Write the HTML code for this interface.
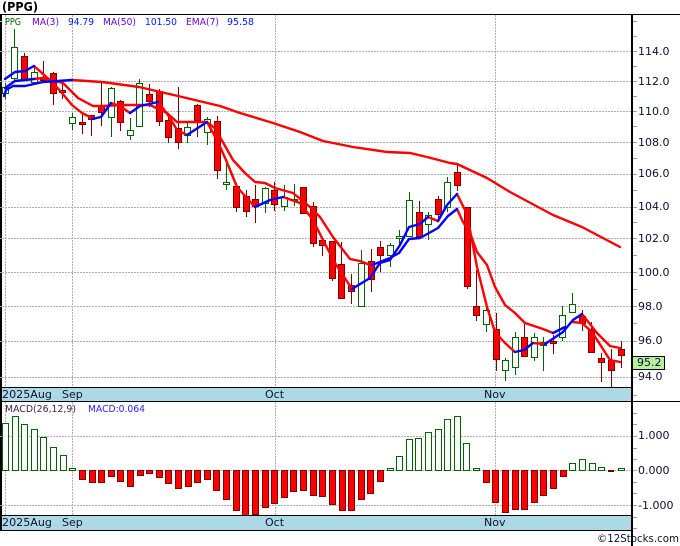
<!DOCTYPE html>
<html><head><meta charset="utf-8"><style>
html,body{margin:0;padding:0;background:#fff;width:680px;height:546px;overflow:hidden}
svg{display:block}
text{font-family:"DejaVu Sans","Liberation Sans",sans-serif;font-size:11px;fill:#101030}
.l{font-size:10px}
</style></head><body>
<svg width="680" height="546" viewBox="0 0 680 546" xmlns="http://www.w3.org/2000/svg">
<rect width="680" height="546" fill="#fff"/>
<g shape-rendering="crispEdges">
<path fill="none" stroke="#b0b0b0" stroke-dasharray="2 1" d="M2 51.5H632M2 81.5H632M2 111.5H632M2 142.5H632M2 174.5H632M2 207.5H632M2 238.5H632M2 272.5H632M2 306.5H632M2 341.5H632M2 377.5H632M2 436.5H632M2 470.5H632M2 505.5H632M5.5 15V516M72.5 15V516M275.5 15V516M495.5 15V516"/>
<path fill="none" stroke="#a0a0a0" d="M632 21.5h5M632 36.5h5M632 51.5h5M632 66.5h5M632 81.5h5M632 96.5h5M632 111.5h5M632 126.5h5M632 142.5h5M632 158.5h5M632 174.5h5M632 190.5h5M632 207.5h5M632 222.5h5M632 238.5h5M632 255.5h5M632 272.5h5M632 289.5h5M632 306.5h5M632 323.5h5M632 341.5h5M632 359.5h5M632 377.5h5M632 395.5h5M632 413.5h5M632 424.5h5M632 436.5h5M632 448.5h5M632 459.5h5M632 470.5h5M632 482.5h5M632 493.5h5M632 505.5h5M632 517.5h5M632 528.5h5"/>
<!-- green wicks -->
<path fill="none" stroke="#006400" d="M5.5 83V99M14.5 29V80M34.5 66V83M72.5 113V130M111.5 87V137M130.5 118V140M139.5 79V126M187.5 122V143M207.5 117V145M226.5 164V190M265.5 187V213M284.5 185V211M294.5 184V206M361.5 250V306M390.5 243V267M399.5 230V245M409.5 192V237M428.5 212V240M447.5 177V212M486.5 307V332M505.5 358V381M515.5 332V375M534.5 333V361M543.5 337V371M562.5 306V341M572.5 293V312"/>
<!-- red wicks -->
<path fill="none" stroke="#800000" d="M24.5 53V80M43.5 61V82M53.5 72V105M62.5 82V99M82.5 113V134M91.5 115V136M101.5 82V126M120.5 100V131M149.5 84V107M159.5 89V126M168.5 113V143M178.5 87V149M197.5 104V137M217.5 116V179M236.5 183V212M246.5 190V217M255.5 185V223M274.5 182V211M303.5 187V213M313.5 202V247M322.5 238V256M332.5 241V281M341.5 242V299M351.5 274V304M371.5 249V292M380.5 241V272M419.5 201V238M438.5 196V222M457.5 163V191M467.5 207V289M476.5 270V321M496.5 313V371M524.5 323V356M553.5 335V354M582.5 310V331M591.5 322V353M601.5 353V382M611.5 349V387M621.5 341V368"/>
<!-- green bodies -->
<path fill="#fff" stroke="#006400" d="M2.5 87.5h6v6h-6zM11.5 47.5h6v31h-6zM31.5 72.5h6v10h-6zM69.5 117.5h6v6h-6zM108.5 88.5h6v29h-6zM127.5 130.5h6v5h-6zM136.5 83.5h6v43h-6zM184.5 127.5h6v8h-6zM204.5 119.5h6v13h-6zM223.5 182.5h6v2h-6zM262.5 188.5h6v15h-6zM281.5 197.5h6v9h-6zM291.5 199.5h6v1h-6zM358.5 263.5h6v43h-6zM387.5 245.5h6v10h-6zM396.5 236.5h6v2h-6zM406.5 200.5h6v36h-6zM425.5 215.5h6v9h-6zM444.5 182.5h6v25h-6zM483.5 310.5h6v14h-6zM502.5 360.5h6v10h-6zM512.5 337.5h6v30h-6zM531.5 337.5h6v20h-6zM540.5 342.5h6v3h-6zM559.5 315.5h6v22h-6zM569.5 304.5h6v8h-6z"/>
<!-- red bodies -->
<path fill="#f00" stroke="#800000" d="M21.5 56.5h6v24h-6zM40.5 78.5h6v2h-6zM50.5 73.5h6v20h-6zM59.5 90.5h6v2h-6zM79.5 122.5h6v2h-6zM88.5 115.5h6v4h-6zM98.5 106.5h6v6h-6zM117.5 101.5h6v21h-6zM146.5 94.5h6v7h-6zM156.5 91.5h6v30h-6zM165.5 120.5h6v17h-6zM175.5 128.5h6v14h-6zM194.5 105.5h6v15h-6zM214.5 121.5h6v49h-6zM233.5 186.5h6v21h-6zM243.5 196.5h6v15h-6zM252.5 199.5h6v7h-6zM271.5 190.5h6v14h-6zM300.5 187.5h6v26h-6zM310.5 206.5h6v37h-6zM319.5 240.5h6v5h-6zM329.5 241.5h6v37h-6zM338.5 264.5h6v34h-6zM348.5 285.5h6v6h-6zM368.5 261.5h6v18h-6zM377.5 247.5h6v8h-6zM416.5 212.5h6v24h-6zM435.5 199.5h6v15h-6zM454.5 172.5h6v13h-6zM464.5 207.5h6v79h-6zM473.5 306.5h6v9h-6zM493.5 329.5h6v30h-6zM521.5 337.5h6v19h-6zM550.5 341.5h6v2h-6zM579.5 316.5h6v7h-6zM588.5 329.5h6v23h-6zM598.5 358.5h6v4h-6zM608.5 360.5h6v10h-6zM618.5 349.5h6v6h-6z"/>
</g>
<!-- moving averages -->
<g fill="none" stroke-width="2.4" stroke-linejoin="round" stroke-linecap="round">
<path stroke="#f00" d="M72 80L102 82L139 87L178 96L220 106L240 113L273 123L300 132L323 141L353 147L387 152L410 153L427 157L450 163L457 164L487 178L510 192L553 215L582 227L620 247"/>
<path stroke="#f00" d="M34 79L43 78L63 83L78 98L93 106L103 106L120 105L150 105L167 113L177 122L195 122L207 122L217 130L220 137L233 160L245 173L255 182L265 183L275 188L293 193L310 207L320 217L333 237L350 259L360 261L370 265"/>
<path stroke="#f00" d="M34 66L43 74L53 83L62 93L72 105L82 113L92 118M111 103L120 106L130 113M159 103L168 115L177 130L187 135M207 122L217 140L226 160L237 187L255 207M283 197L300 203L313 220L323 240L335 263L352 289M428 217L438 221"/>
<path stroke="#f00" d="M457 194L465 210L470 230L477 267L487 307L495 332L505 343L515 352M533 343L545 344M573 322L582 323L592 332L610 360L620 362"/>
<path stroke="#f00" d="M457 209L463 222L470 233L477 252L487 265L495 287L505 305L515 313L525 323L543 329L553 333M582 314L597 333L610 346L620 348"/>
<path stroke="#00f" d="M4 96L6 90L13 86L25 86L43 82L72 80"/>
<path stroke="#00f" d="M5 79L15 72L25 71L34 66M5 88L15 81L34 79"/>
<path stroke="#00f" d="M92 119L101 117L111 103M130 113L140 106L158 102M187 135L207 122M255 207L270 200L283 197"/>
<path stroke="#00f" d="M352 289L370 278L380 263L390 260L400 245L409 227L420 224L428 217M438 221L447 205L457 194"/>
<path stroke="#00f" d="M372 265L390 258L399 253L409 239L420 238L438 228L448 216L457 209"/>
<path stroke="#00f" d="M515 352L524 350L533 343M545 344L563 332L573 320L582 314M553 333L565 327"/>
</g>
<g shape-rendering="crispEdges">
<!-- MACD -->
<path fill="#fff" stroke="#006400" d="M2.5 423.5h6v47h-6zM12.5 416.5h6v54h-6zM21.5 424.5h6v46h-6zM31.5 429.5h6v41h-6zM40.5 437.5h6v33h-6zM50.5 447.5h6v23h-6zM60.5 455.5h6v15h-6zM69.5 468.5h6v2h-6zM387.5 468.5h6v2h-6zM396.5 456.5h6v14h-6zM406.5 439.5h6v31h-6zM415.5 438.5h6v32h-6zM425.5 432.5h6v38h-6zM435.5 429.5h6v41h-6zM444.5 419.5h6v51h-6zM454.5 416.5h6v54h-6zM463.5 443.5h6v27h-6zM473.5 468.5h6v2h-6zM569.5 463.5h6v7h-6zM579.5 459.5h6v11h-6zM589.5 463.5h6v7h-6zM598.5 467.5h6v3h-6zM618.5 468.5h6v2h-6z"/>
<path fill="#f00" stroke="#800000" d="M79.5 470.5h6v9h-6zM89.5 470.5h6v12h-6zM98.5 470.5h6v12h-6zM108.5 470.5h6v6h-6zM117.5 470.5h6v11h-6zM127.5 470.5h6v16h-6zM137.5 470.5h6v5h-6zM146.5 470.5h6v3h-6zM156.5 470.5h6v7h-6zM165.5 470.5h6v13h-6zM175.5 470.5h6v18h-6zM185.5 470.5h6v16h-6zM194.5 470.5h6v12h-6zM204.5 470.5h6v9h-6zM213.5 470.5h6v20h-6zM223.5 470.5h6v29h-6zM233.5 470.5h6v40h-6zM242.5 470.5h6v45h-6zM252.5 470.5h6v44h-6zM262.5 470.5h6v37h-6zM271.5 470.5h6v33h-6zM281.5 470.5h6v27h-6zM290.5 470.5h6v21h-6zM300.5 470.5h6v20h-6zM310.5 470.5h6v25h-6zM319.5 470.5h6v26h-6zM329.5 470.5h6v34h-6zM339.5 470.5h6v40h-6zM348.5 470.5h6v40h-6zM358.5 470.5h6v29h-6zM367.5 470.5h6v23h-6zM377.5 470.5h6v11h-6zM483.5 470.5h6v12h-6zM492.5 470.5h6v32h-6zM502.5 470.5h6v42h-6zM512.5 470.5h6v39h-6zM521.5 470.5h6v39h-6zM531.5 470.5h6v32h-6zM540.5 470.5h6v25h-6zM550.5 470.5h6v18h-6zM560.5 470.5h6v6h-6z"/>
<rect x="608" y="470" width="6" height="2" fill="#700000"/>
<!-- bands -->
<rect x="0" y="388" width="632" height="13" fill="#add8e6"/>
<rect x="0" y="516" width="632" height="14" fill="#add8e6"/>
<path fill="none" stroke="#000" d="M0 14.5H680M0 387.5H632M0 401.5H680M0 515.5H632M0 530.5H632"/>
<path fill="none" stroke="#000" stroke-width="2" d="M632 14V546M1 14V531"/>
<path fill="none" stroke="#a0a0a0" d="M0 21.5H2M0 51.5H2M0 81.5H2M0 111.5H2M0 142.5H2M0 174.5H2M0 207.5H2M0 238.5H2M0 272.5H2M0 306.5H2M0 341.5H2M0 377.5H2M0 436.5H2M0 505.5H2"/>
<rect x="632.5" y="356.5" width="32" height="13" fill="#b4f0a0" stroke="#000"/>
</g>
<text x="2" y="11" style="font-weight:bold;font-size:12px;fill:#000" textLength="36" lengthAdjust="spacingAndGlyphs">(PPG)</text>
<g class="lg">
<text class="l" x="5" y="25" textLength="16" lengthAdjust="spacingAndGlyphs" style="fill:#006400">PPG</text>
<text class="l" x="32" y="25" textLength="27" lengthAdjust="spacingAndGlyphs" style="fill:#6a00e0">MA(3)</text>
<text class="l" x="68" y="25" textLength="26" lengthAdjust="spacingAndGlyphs" style="fill:#0020f0">94.79</text>
<text class="l" x="103" y="25" textLength="33" lengthAdjust="spacingAndGlyphs" style="fill:#6a00e0">MA(50)</text>
<text class="l" x="145" y="25" textLength="32" lengthAdjust="spacingAndGlyphs" style="fill:#0020f0">101.50</text>
<text class="l" x="186" y="25" textLength="33" lengthAdjust="spacingAndGlyphs" style="fill:#6a00e0">EMA(7)</text>
<text class="l" x="227" y="25" textLength="27" lengthAdjust="spacingAndGlyphs" style="fill:#0020f0">95.58</text>
<text class="l" x="5" y="412" textLength="71" lengthAdjust="spacingAndGlyphs" style="fill:#402050">MACD(26,12,9)</text>
<text class="l" x="88" y="412" textLength="57" lengthAdjust="spacingAndGlyphs" style="fill:#2a20f0">MACD:0.064</text>
</g>
<g>
<text x="638" y="55">114.0</text><text x="638" y="85">112.0</text><text x="638" y="115">110.0</text><text x="638" y="146">108.0</text><text x="638" y="177">106.0</text><text x="638" y="210">104.0</text><text x="638" y="242">102.0</text><text x="638" y="276">100.0</text>
<text x="638" y="310">98.0</text><text x="638" y="344">96.0</text><text x="638" y="380">94.0</text>
<text x="637" y="366">95.2</text>
<text x="638" y="439">1.000</text><text x="638" y="474">0.000</text><text x="638" y="509">-1.000</text>
<text x="2" y="398" textLength="50" lengthAdjust="spacingAndGlyphs">2025Aug</text><text x="62" y="398">Sep</text><text x="265" y="398">Oct</text><text x="484" y="398">Nov</text>
<text x="2" y="526" textLength="50" lengthAdjust="spacingAndGlyphs">2025Aug</text><text x="62" y="526">Sep</text><text x="265" y="526">Oct</text><text x="484" y="526">Nov</text>
<text x="597" y="542" textLength="82" lengthAdjust="spacingAndGlyphs">©12Stocks.com</text>
</g>
</svg>
</body></html>
